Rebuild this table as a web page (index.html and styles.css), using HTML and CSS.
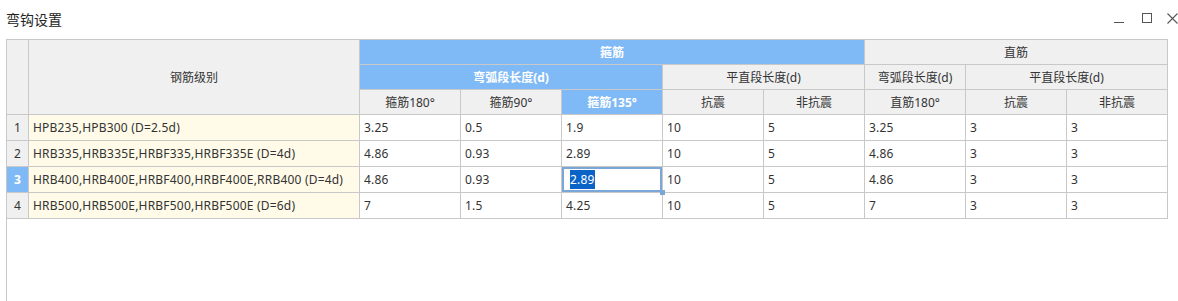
FILE: index.html
```html
<!DOCTYPE html>
<html lang="zh-CN">
<head>
    <meta charset="UTF-8">
    <title>弯钩设置</title>
    <link rel="stylesheet" href="styles.css">
</head>
<body>

    <div class="dialog">
        <div class="title-bar">
            <span class="title">弯钩设置</span>
            <div class="win-buttons">
                <svg class="win-btn" width="12" height="12" viewBox="0 0 12 12"><path d="M1 10.5h10" stroke="#555" stroke-width="1"/></svg>
                <svg class="win-btn" width="12" height="12" viewBox="0 0 12 12"><rect x="1.5" y="1.5" width="9" height="9" fill="none" stroke="#555" stroke-width="1"/></svg>
                <svg class="win-btn" width="12" height="12" viewBox="0 0 12 12"><path d="M1.5 1.5l10 10M11.5 1.5l-10 10" stroke="#555" stroke-width="1.1"/></svg>
            </div>
        </div>

        <div class="grid-wrap">
            <table class="grid">
                <colgroup>
                    <col class="c-num">
                    <col class="c-name">
                    <col class="c-val"><col class="c-val"><col class="c-val"><col class="c-val">
                    <col class="c-val"><col class="c-val"><col class="c-val"><col class="c-val">
                </colgroup>
                <thead>
                    <tr>
                        <th rowspan="3"></th>
                        <th rowspan="3">钢筋级别</th>
                        <th colspan="5" class="hl">箍筋</th>
                        <th colspan="3">直筋</th>
                    </tr>
                    <tr>
                        <th colspan="3" class="hl">弯弧段长度(d)</th>
                        <th colspan="2">平直段长度(d)</th>
                        <th>弯弧段长度(d)</th>
                        <th colspan="2">平直段长度(d)</th>
                    </tr>
                    <tr>
                        <th>箍筋180°</th>
                        <th>箍筋90°</th>
                        <th class="hl">箍筋135°</th>
                        <th>抗震</th>
                        <th>非抗震</th>
                        <th>直筋180°</th>
                        <th>抗震</th>
                        <th>非抗震</th>
                    </tr>
                </thead>
                <tbody>
                    <tr>
                        <td class="num">1</td>
                        <td class="name">HPB235,HPB300 (D=2.5d)</td>
                        <td>3.25</td><td>0.5</td><td>1.9</td><td>10</td><td>5</td><td>3.25</td><td>3</td><td>3</td>
                    </tr>
                    <tr>
                        <td class="num">2</td>
                        <td class="name">HRB335,HRB335E,HRBF335,HRBF335E (D=4d)</td>
                        <td>4.86</td><td>0.93</td><td>2.89</td><td>10</td><td>5</td><td>4.86</td><td>3</td><td>3</td>
                    </tr>
                    <tr>
                        <td class="num current">3</td>
                        <td class="name">HRB400,HRB400E,HRBF400,HRBF400E,RRB400 (D=4d)</td>
                        <td>4.86</td><td>0.93</td>
                        <td class="editing"><span class="sel-text">2.89</span><i class="handle"></i></td>
                        <td>10</td><td>5</td><td>4.86</td><td>3</td><td>3</td>
                    </tr>
                    <tr>
                        <td class="num">4</td>
                        <td class="name">HRB500,HRB500E,HRBF500,HRBF500E (D=6d)</td>
                        <td>7</td><td>1.5</td><td>4.25</td><td>10</td><td>5</td><td>7</td><td>3</td><td>3</td>
                    </tr>
                </tbody>
            </table>
        </div>
    </div>

</body>
</html>
```

FILE: styles.css
```css
html, body {
    margin: 0;
    padding: 0;
    background-color: #ffffff;
}
body {
    font-family: 'Noto Sans', 'Noto Sans CJK SC', sans-serif;
    color: #333333;
    font-size: 12px;
}
.dialog {
    display: flex;
    flex-direction: column;
    width: 1178px;
    height: 301px;
    overflow: hidden;
}
.title-bar {
    display: flex;
    align-items: center;
    justify-content: space-between;
    height: 39px;
    padding-left: 6px;
}
.title {
    font-size: 14px;
    color: #222222;
    margin-top: -2px;
}
.win-buttons {
    display: flex;
    gap: 16px;
    margin-top: -3px;
    flex-shrink: 0;
}
.win-btn {
    display: block;
    flex-shrink: 0;
}
.win-btn + .win-btn + .win-btn {
    margin-left: -3px;
}
.grid-wrap {
    flex: 1;
    margin-left: 6px;
    border-left: 1px solid #c8c8c8;
    overflow: hidden;
}
.grid {
    table-layout: fixed;
    border-collapse: collapse;
    width: 1161px;
    margin-left: -1px;
}
.c-num {
    width: 22px;
}
.c-name {
    width: 331px;
}
.c-val {
    width: 101px;
}
th, td {
    border: 1px solid #c8c8c8;
    padding: 0 4px;
    white-space: nowrap;
    overflow: hidden;
}
th {
    height: 24px;
    background-color: #f0f0f0;
    font-weight: normal;
    text-align: center;
    color: #333333;
}
th.hl {
    background-color: #80baf6;
    color: #ffffff;
    font-weight: bold;
}
td {
    height: 25px;
    text-align: left;
    letter-spacing: 0.2px;
}
td.num {
    background-color: #f0f0f0;
    text-align: center;
    padding: 0;
}
td.num.current {
    background-color: #80baf6;
    color: #ffffff;
    font-weight: bold;
}
td.name {
    background-color: #fffbe8;
}
td.editing {
    position: relative;
    box-shadow: inset 0 0 0 2px #7ba7d8;
    padding-left: 8px;
    overflow: visible;
}
.sel-text {
    background-color: #0a64c8;
    color: #ffffff;
    padding: 1px 0;
}
.handle {
    position: absolute;
    right: -3px;
    bottom: -3px;
    width: 5px;
    height: 5px;
    background-color: #7ba7d8;
}
```
